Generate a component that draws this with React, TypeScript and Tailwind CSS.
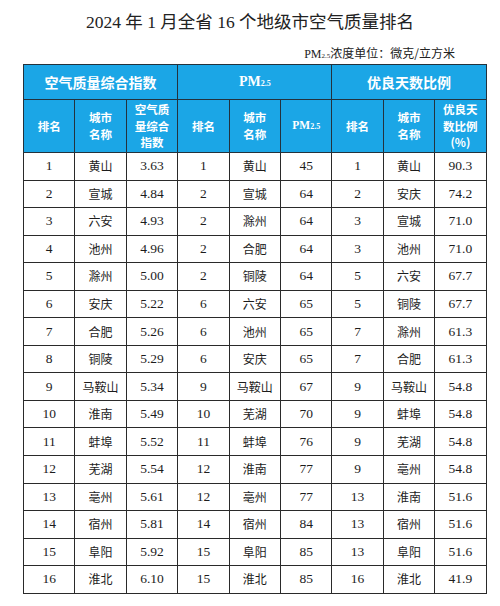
import React from "react";

const aqi: [string, string, string][] = [
  ["1", "黄山", "3.63"],
  ["2", "宣城", "4.84"],
  ["3", "六安", "4.93"],
  ["4", "池州", "4.96"],
  ["5", "滁州", "5.00"],
  ["6", "安庆", "5.22"],
  ["7", "合肥", "5.26"],
  ["8", "铜陵", "5.29"],
  ["9", "马鞍山", "5.34"],
  ["10", "淮南", "5.49"],
  ["11", "蚌埠", "5.52"],
  ["12", "芜湖", "5.54"],
  ["13", "亳州", "5.61"],
  ["14", "宿州", "5.81"],
  ["15", "阜阳", "5.92"],
  ["16", "淮北", "6.10"],
];
const pm: [string, string, string][] = [
  ["1", "黄山", "45"],
  ["2", "宣城", "64"],
  ["2", "滁州", "64"],
  ["2", "合肥", "64"],
  ["2", "铜陵", "64"],
  ["6", "六安", "65"],
  ["6", "池州", "65"],
  ["6", "安庆", "65"],
  ["9", "马鞍山", "67"],
  ["10", "芜湖", "70"],
  ["11", "蚌埠", "76"],
  ["12", "淮南", "77"],
  ["12", "亳州", "77"],
  ["14", "宿州", "84"],
  ["15", "阜阳", "85"],
  ["15", "淮北", "85"],
];
const good: [string, string, string][] = [
  ["1", "黄山", "90.3"],
  ["2", "安庆", "74.2"],
  ["3", "宣城", "71.0"],
  ["3", "池州", "71.0"],
  ["5", "六安", "67.7"],
  ["5", "铜陵", "67.7"],
  ["7", "滁州", "61.3"],
  ["7", "合肥", "61.3"],
  ["9", "马鞍山", "54.8"],
  ["9", "蚌埠", "54.8"],
  ["9", "芜湖", "54.8"],
  ["9", "亳州", "54.8"],
  ["13", "淮南", "51.6"],
  ["13", "宿州", "51.6"],
  ["13", "阜阳", "51.6"],
  ["16", "淮北", "41.9"],
];

const serif = "font-['Liberation_Serif','Noto_Sans_CJK_SC',serif]";
const cjk = "font-['Noto_Sans_CJK_SC',sans-serif]";

const Hd = ({
  children,
  className = "",
  colSpan,
}: {
  children: React.ReactNode;
  className?: string;
  colSpan?: number;
}) => (
  <th
    colSpan={colSpan}
    className={`border border-[#24323c] bg-[#1ba6e6] text-white font-bold p-0 ${cjk} ${className}`}
  >
    {children}
  </th>
);

const Pm = () => (
  <span className={serif}>
    PM<span className="text-[8px]">2.5</span>
  </span>
);

const Num = ({ v }: { v: string }) => (
  <td className={`border border-[#2a2a2a] p-0 text-center text-[13.5px] leading-[16px] ${serif}`}>{v}</td>
);
const City = ({ v }: { v: string }) => (
  <td className={`border border-[#2a2a2a] p-0 text-center text-[12px] leading-[18px] ${cjk}`}>{v}</td>
);

export default function App() {
  return (
    <div className="w-[500px] h-[606px] bg-white text-[#1c1c1c]">
      <div className="pt-[10px] text-center text-[17.5px] leading-[24px] text-[#222] font-['Liberation_Serif','Noto_Sans_CJK_SC',serif]">
        2024 年 1 月全省 16 个地级市空气质量排名
      </div>
      <div className="flex justify-end items-baseline pr-[45px] mt-[11px] text-[12px] leading-[15px] text-[#222]">
        <span className={serif}>
          PM<span className="text-[7px]">2.5</span>
        </span>
        <span className={cjk}>浓度单位：微克/立方米</span>
      </div>
      <table className="ml-[23px] table-fixed border-collapse w-[463px] border border-[#222]">
        <colgroup>
          {Array.from({ length: 9 }).map((_, i) => (
            <col key={i} className="w-[51.4px]" />
          ))}
        </colgroup>
        <thead>
          <tr className="h-[35px]">
            <Hd colSpan={3} className="text-[14px] leading-[21px]">
              空气质量综合指数
            </Hd>
            <Hd colSpan={3} className="text-[14px] leading-[21px]">
              <Pm />
            </Hd>
            <Hd colSpan={3} className="text-[14px] leading-[21px]">
              优良天数比例
            </Hd>
          </tr>
          <tr className="h-[53px] text-[11.5px] leading-[16.75px]">
            <Hd>排名</Hd>
            <Hd>
              城市
              <br />
              名称
            </Hd>
            <Hd>
              空气质
              <br />
              量综合
              <br />
              指数
            </Hd>
            <Hd>排名</Hd>
            <Hd>
              城市
              <br />
              名称
            </Hd>
            <Hd>
              <Pm />
            </Hd>
            <Hd>排名</Hd>
            <Hd>
              城市
              <br />
              名称
            </Hd>
            <Hd>
              优良天
              <br />
              数比例
              <br />
              (%)
            </Hd>
          </tr>
        </thead>
        <tbody>
          {aqi.map((r, i) => (
            <tr key={i} className="h-[27.55px]">
              <Num v={r[0]} />
              <City v={r[1]} />
              <Num v={r[2]} />
              <Num v={pm[i][0]} />
              <City v={pm[i][1]} />
              <Num v={pm[i][2]} />
              <Num v={good[i][0]} />
              <City v={good[i][1]} />
              <Num v={good[i][2]} />
            </tr>
          ))}
        </tbody>
      </table>
    </div>
  );
}
